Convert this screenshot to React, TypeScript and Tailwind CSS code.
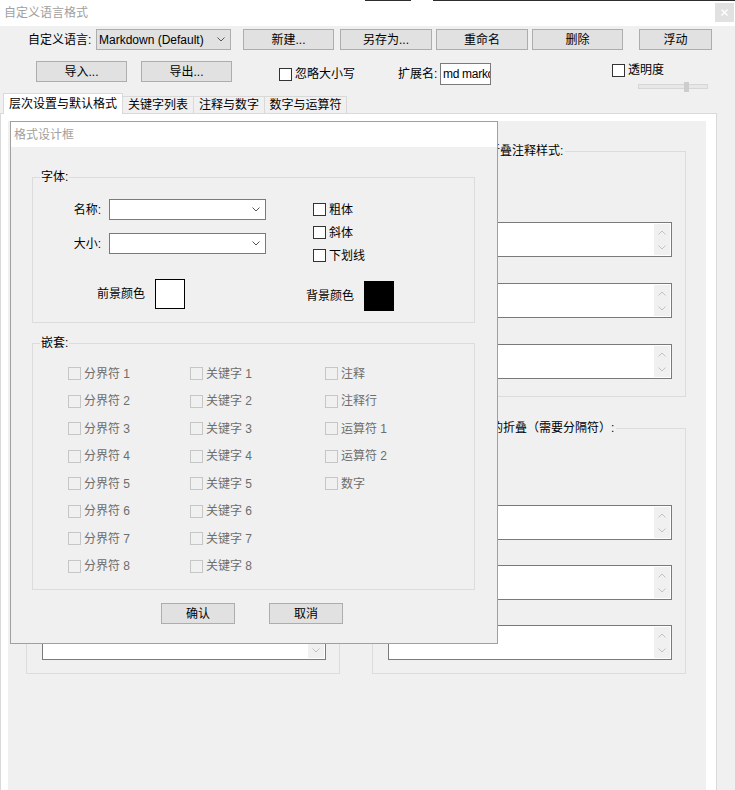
import React from "react";

const delimiterItems = ["分界符 1", "分界符 2", "分界符 3", "分界符 4", "分界符 5", "分界符 6", "分界符 7", "分界符 8"];
const keywordItems = ["关键字 1", "关键字 2", "关键字 3", "关键字 4", "关键字 5", "关键字 6", "关键字 7", "关键字 8"];
const otherItems = ["注释", "注释行", "运算符 1", "运算符 2", "数字"];

function Chevron({ up = false, color = "#555555" }: { up?: boolean; color?: string }) {
  return (
    <svg width="8" height="5" viewBox="0 0 8 5" fill="none">
      <path d={up ? "M0.5 4.5L4 1L7.5 4.5" : "M0.5 0.5L4 4L7.5 0.5"} stroke={color} strokeWidth="1" />
    </svg>
  );
}

function Checkbox({ disabled = false }: { disabled?: boolean }) {
  return disabled ? (
    <span className="block h-[13px] w-[13px] shrink-0 border border-[#c6c6c6]" />
  ) : (
    <span className="block h-[13px] w-[13px] shrink-0 border border-[#333333] bg-white" />
  );
}

function Btn({ children, className = "" }: { children: React.ReactNode; className?: string }) {
  return (
    <div className={`flex h-[21px] shrink-0 items-center justify-center border border-[#adadad] bg-[#e1e1e1] ${className}`}>
      {children}
    </div>
  );
}

function ScrollBox() {
  return (
    <div className="flex h-[35px] justify-end border border-[#7a7a7a] bg-white p-px">
      <div className="flex w-[16px] flex-col items-center justify-center gap-[10px] bg-[#f0f0f0]">
        <Chevron up color="#c2c2c2" />
        <Chevron color="#c2c2c2" />
      </div>
    </div>
  );
}

// group box of the tab page; mostly covered by the dialog, so only the legend is optional
function FoldBox({
  title,
  legendClass,
  bodyClass,
  className = "",
}: {
  title?: string;
  legendClass: string;
  bodyClass: string;
  className?: string;
}) {
  return (
    <fieldset className={`w-[314px] border border-[#dcdcdc] ${className}`}>
      <legend className={`h-[16px] px-[2px] leading-[16px] ${legendClass}`}>{title}</legend>
      <div className={`flex flex-col ${bodyClass}`}>
        {[0, 1, 2].map((i) => (
          <div key={i} className="ml-[15px] flex w-[284px] flex-col pt-[18px]">
            <ScrollBox />
          </div>
        ))}
      </div>
    </fieldset>
  );
}

function DialogSelect() {
  return (
    <div className="ml-[8px] flex h-[21px] w-[157px] items-center justify-end border border-[#7a7a7a] bg-white pr-[5px]">
      <Chevron />
    </div>
  );
}

function NestColumn({ items, className = "" }: { items: string[]; className?: string }) {
  return (
    <div className={`flex flex-col ${className}`}>
      {items.map((item) => (
        <div key={item} className="flex h-[27.5px] items-center gap-[3px] text-[#6d6d6d]">
          <Checkbox disabled />
          <span>{item}</span>
        </div>
      ))}
    </div>
  );
}

function StyleDialog() {
  return (
    <div className="absolute left-[2px] top-0 z-10 flex h-[523px] w-[488px] flex-col border border-[#a0a0a0] bg-[#f0f0f0]">
      <div className="flex h-[25px] shrink-0 items-center bg-white pl-[3px] text-[#a0a0a0]">格式设计框</div>

      <fieldset className="ml-[21px] mt-[22px] w-[443px] border border-[#dcdcdc]">
        <legend className="ml-[7px] px-px leading-[16px]">字体:</legend>
        <div className="mt-[14px] flex items-start">
          <div className="flex flex-col gap-[13px]">
            <div className="flex h-[21px] items-center">
              <span className="w-[68px] text-right">名称:</span>
              <DialogSelect />
            </div>
            <div className="flex h-[21px] items-center">
              <span className="w-[68px] text-right">大小:</span>
              <DialogSelect />
            </div>
          </div>
          <div className="-mt-px ml-[47px] flex flex-col">
            {["粗体", "斜体", "下划线"].map((t) => (
              <div key={t} className="flex h-[23px] items-center gap-[3px]">
                <Checkbox />
                <span>{t}</span>
              </div>
            ))}
          </div>
        </div>
        <div className="mb-[11px] ml-[64px] mt-[12px] flex items-start">
          <span className="flex h-[30px] w-[48px] items-center">前景颜色</span>
          <div className="ml-[10px] h-[30px] w-[30px] border border-black bg-white" />
          <div className="ml-[121px] mt-[2px] flex items-center">
            <span className="w-[48px]">背景颜色</span>
            <div className="ml-[10px] h-[30px] w-[30px] bg-black" />
          </div>
        </div>
      </fieldset>

      <fieldset className="ml-[21px] mt-[12px] w-[443px] border border-[#dcdcdc]">
        <legend className="ml-[7px] px-px leading-[16px]">嵌套:</legend>
        <div className="mb-[9px] ml-[35px] mt-[9px] flex">
          <NestColumn items={delimiterItems} className="w-[122px]" />
          <NestColumn items={keywordItems} className="w-[135px]" />
          <NestColumn items={otherItems} />
        </div>
      </fieldset>

      <div className="ml-[150px] mt-[13px] flex gap-[34px]">
        <Btn className="w-[74px]">确认</Btn>
        <Btn className="w-[74px]">取消</Btn>
      </div>
    </div>
  );
}

export default function App() {
  return (
    <div className="flex h-[790px] w-[735px] flex-col overflow-hidden bg-[#f0f0f0] font-['Liberation_Sans','Noto_Sans_CJK_SC',sans-serif] text-[12px] leading-[16px] text-black">
      {/* title bar */}
      <div className="flex h-[26px] shrink-0 flex-col bg-white">
        <div className="flex h-px">
          <div className="ml-[365px] w-[46px] bg-[#2d2d2d]" />
          <div className="ml-[22px] flex-1 bg-[#2d2d2d]" />
        </div>
        <div className="flex flex-1 items-start justify-between">
          <span className="ml-[4px] mt-[4px] text-[#a0a0a0]">自定义语言格式</span>
          <div className="mr-px mt-[2px] flex h-[19px] w-[19px] items-center justify-center bg-[#e1e1e1]">
            <svg width="7" height="7" viewBox="0 0 7 7">
              <path d="M0.5 0.5L6.5 6.5M6.5 0.5L0.5 6.5" stroke="#ffffff" strokeWidth="1.4" />
            </svg>
          </div>
        </div>
      </div>

      {/* row 1 */}
      <div className="mt-[3px] flex h-[21px] shrink-0 items-center">
        <span className="ml-[28px] w-[68px]">自定义语言:</span>
        <div className="flex h-[21px] w-[135px] items-center justify-between border border-[#adadad] bg-[#e1e1e1] pl-[2px] pr-[5px]">
          <span className="whitespace-nowrap">Markdown (Default)</span>
          <Chevron />
        </div>
        <Btn className="ml-[12px] w-[91px]">新建...</Btn>
        <Btn className="ml-[6px] w-[92px]">另存为...</Btn>
        <Btn className="ml-[4px] w-[92px]">重命名</Btn>
        <Btn className="ml-[4px] w-[91px]">删除</Btn>
        <Btn className="ml-[16px] w-[73px]">浮动</Btn>
      </div>

      {/* row 2 */}
      <div className="mt-[11px] flex h-[32px] shrink-0 items-start">
        <Btn className="ml-[36px] w-[91px]">导入...</Btn>
        <Btn className="ml-[14px] w-[91px]">导出...</Btn>
        <div className="ml-[47px] mt-[5px] flex h-[16px] items-center gap-[3px]">
          <Checkbox />
          <span>忽略大小写</span>
        </div>
        <div className="ml-[43px] mt-[2px] flex items-center">
          <span className="w-[42px]">扩展名:</span>
          <div className="flex h-[22px] w-[51px] items-center overflow-hidden whitespace-nowrap border border-[#7a7a7a] bg-white pl-[2px] tracking-[-0.3px]">
            md markc
          </div>
        </div>
        <div className="ml-[121px] mt-px flex flex-col">
          <div className="flex h-[16px] items-center gap-[3px]">
            <Checkbox />
            <span>透明度</span>
          </div>
          <div className="relative ml-[26px] mt-[6px] h-[5px] w-[70px] border border-[#d6d6d6] bg-[#e7e7e7]">
            <div className="absolute left-[45px] top-[-3px] h-[10px] w-[5px] bg-[#cdcdcd]" />
          </div>
        </div>
      </div>

      {/* tabs */}
      <div className="relative z-10 flex h-[21px] shrink-0 items-end pl-[3px]">
        <div className="flex h-[21px] w-[120px] items-center justify-center border border-b-0 border-[#d9d9d9] bg-white">
          层次设置与默认格式
        </div>
        <div className="-ml-px mb-px flex h-[17px] w-[72px] items-center justify-center border border-b-0 border-[#d9d9d9]">
          关键字列表
        </div>
        <div className="-ml-px mb-px flex h-[17px] w-[72px] items-center justify-center border border-b-0 border-[#d9d9d9]">
          注释与数字
        </div>
        <div className="-ml-px mb-px flex h-[17px] w-[83px] items-center justify-center border border-b-0 border-[#d9d9d9]">
          数字与运算符
        </div>
      </div>

      {/* tab page */}
      <div className="-mt-px flex min-h-0 w-[717px] flex-1 flex-col border border-b-0 border-[#d9d9d9] bg-white pl-[7px] pr-[10px] pt-[7px]">
        <div className="relative flex flex-1 items-start gap-[32px] bg-[#f0f0f0] pl-[18px] pt-[22px]">
          <div className="flex flex-col">
            <FoldBox legendClass="ml-[8px]" bodyClass="gap-[8px] pb-[17px] pt-[45px]" />
            <FoldBox legendClass="ml-[8px]" bodyClass="gap-[7px] pb-[13px] pt-[51px]" className="mt-[23px]" />
          </div>
          <div className="flex flex-col">
            <FoldBox title="注释内代码块的折叠注释样式:" legendClass="ml-[29px]" bodyClass="gap-[8px] pb-[17px] pt-[45px]" />
            <FoldBox
              title="多行代码块的折叠（需要分隔符）:"
              legendClass="ml-[56px]"
              bodyClass="gap-[7px] pb-[13px] pt-[51px]"
              className="mt-[23px]"
            />
          </div>

          <StyleDialog />
        </div>
      </div>
    </div>
  );
}
